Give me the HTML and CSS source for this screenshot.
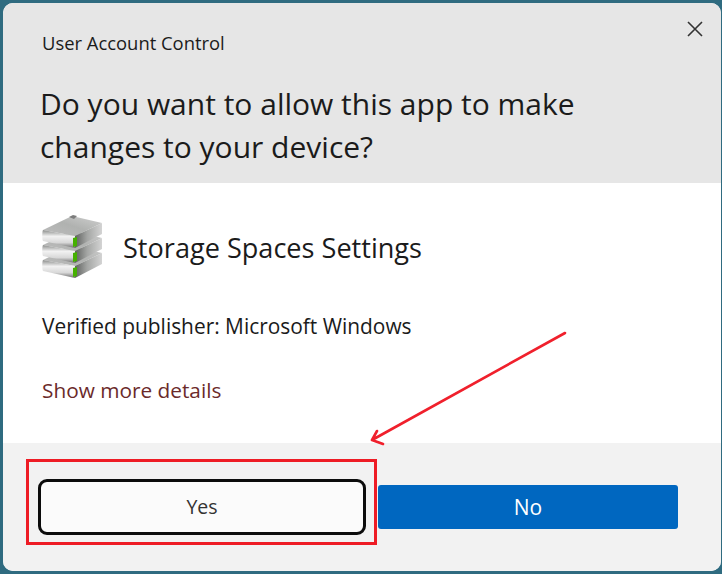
FILE: index.html
```html
<!DOCTYPE html>
<html lang="en">
<head>
<meta charset="utf-8">
<title>User Account Control</title>
<link rel="stylesheet" href="styles.css">
</head>
<body>
<div class="window">
  <header class="head">
    <div class="title-row">
      <span class="title">User Account Control</span>
      <svg class="close" width="16" height="16" viewBox="0 0 16 16"><path d="M1 1 15 15M15 1 1 15" stroke="#333" stroke-width="1.6" fill="none"/></svg>
    </div>
    <h1 class="question">Do you want to allow this app to make changes to your device?</h1>
  </header>
  <main class="body">
    <div class="app">
      <svg class="icon" width="62" height="64" viewBox="0 0 62 64">
        <defs>
          <linearGradient id="top" x1="0" y1="1" x2="1" y2="0"><stop offset="0" stop-color="#bcbcbc"/><stop offset="0.5" stop-color="#b0b2b0"/><stop offset="1" stop-color="#d0d0d0"/></linearGradient>
          <linearGradient id="left" x1="0" y1="0" x2="0" y2="1"><stop offset="0" stop-color="#8a8c8a"/><stop offset="0.35" stop-color="#f2f2f2"/><stop offset="0.7" stop-color="#d8d8d8"/><stop offset="1" stop-color="#6c6c6c"/></linearGradient>
          <linearGradient id="right" x1="0" y1="0" x2="1" y2="0"><stop offset="0" stop-color="#5f615f"/><stop offset="0.45" stop-color="#a4a6a4"/><stop offset="1" stop-color="#d4d4d4"/></linearGradient>
          <filter id="soft" x="-5%" y="-5%" width="110%" height="110%"><feGaussianBlur stdDeviation="0.7"/></filter>
          <g id="drive">
            <path d="M1 16 30 2 60 9 33 22Z" fill="url(#top)"/>
            <path d="M1 16 33 22V34L1 27C0 26 0 17 1 16Z" fill="url(#left)"/>
            <path d="M33 22 60 9V20L33 34Z" fill="url(#right)"/>
            <path d="M31 24 35 23V32L31 33Z" fill="#45b000"/>
          </g>
        </defs>
        <g filter="url(#soft)">
          <use href="#drive" y="30"/>
          <use href="#drive" y="15"/>
          <use href="#drive"/>
          <path d="M27 3 31 1 35 2 32 5Z" fill="#7c7c7c"/>
        </g>
      </svg>
      <span class="app-name">Storage Spaces Settings</span>
    </div>
    <p class="publisher">Verified publisher: Microsoft Windows</p>
    <a class="more">Show more details</a>
  </main>
  <footer class="foot">
    <button class="btn yes">Yes</button>
    <button class="btn no">No</button>
  </footer>
</div>
<div class="highlight"></div>
<svg class="arrow" width="210" height="125" viewBox="0 0 210 125">
  <path d="M197 9 4 116M4 116 9 107M4 116 15 120" stroke="#f0202c" stroke-width="2.6" fill="none" stroke-linecap="round"/>
</svg>
</body>
</html>
```
FILE: styles.css
```css
* { box-sizing: border-box; }
html, body { margin: 0; width: 722px; height: 574px; overflow: hidden; }
body { position: relative; background: #2f6b80; padding: 3px 1px 3px 3px; font-family: "Open Sans", "Noto Sans", sans-serif; color: #1b1b1b; }
.window { height: 100%; border-radius: 10px; overflow: hidden; display: flex; flex-direction: column; background: #fff; }
.head { height: 180px; background: #e6e6e6; padding: 0 18px 0 39px; flex: none; }
.title-row { display: flex; justify-content: space-between; align-items: flex-start; }
.title { font-size: 18.4px; line-height: 24px; margin-top: 28px; }
.close { margin-top: 18px; }
.question { margin: 27px 0 0 -2px; width: 600px; font-weight: 400; font-size: 30px; line-height: 43px; }
.body { flex: 1; padding: 0 39px; }
.app { display: flex; align-items: center; gap: 19px; margin-top: 31px; }
.icon { flex: none; }
.app-name { font-size: 27.1px; line-height: 36px; margin-top: 4px; }
.publisher { margin: 35px 0 0; font-size: 20.9px; line-height: 26px; }
.more { display: block; margin-top: 38px; font-size: 20.8px; line-height: 26px; color: #6b2a2a; }
.foot { height: 128px; flex: none; background: #f2f2f2; display: flex; align-items: center; padding: 0 40px 0 35px; gap: 12px; }
.btn { font-family: inherit; padding: 0; }
.yes { width: 328px; height: 56px; border: 3px solid #0c0c0c; border-radius: 9px; background: #fbfbfb; color: #333; font-size: 19.5px; padding-bottom: 2px; }
.no { width: 300px; height: 44px; border: 0; border-radius: 3px; background: #0067c0; color: #fff; font-size: 21px; }
.highlight { position: absolute; left: 26px; top: 459px; width: 351px; height: 86px; border: 3px solid #ee1c25; }
.arrow { position: absolute; left: 368px; top: 324px; }
```
